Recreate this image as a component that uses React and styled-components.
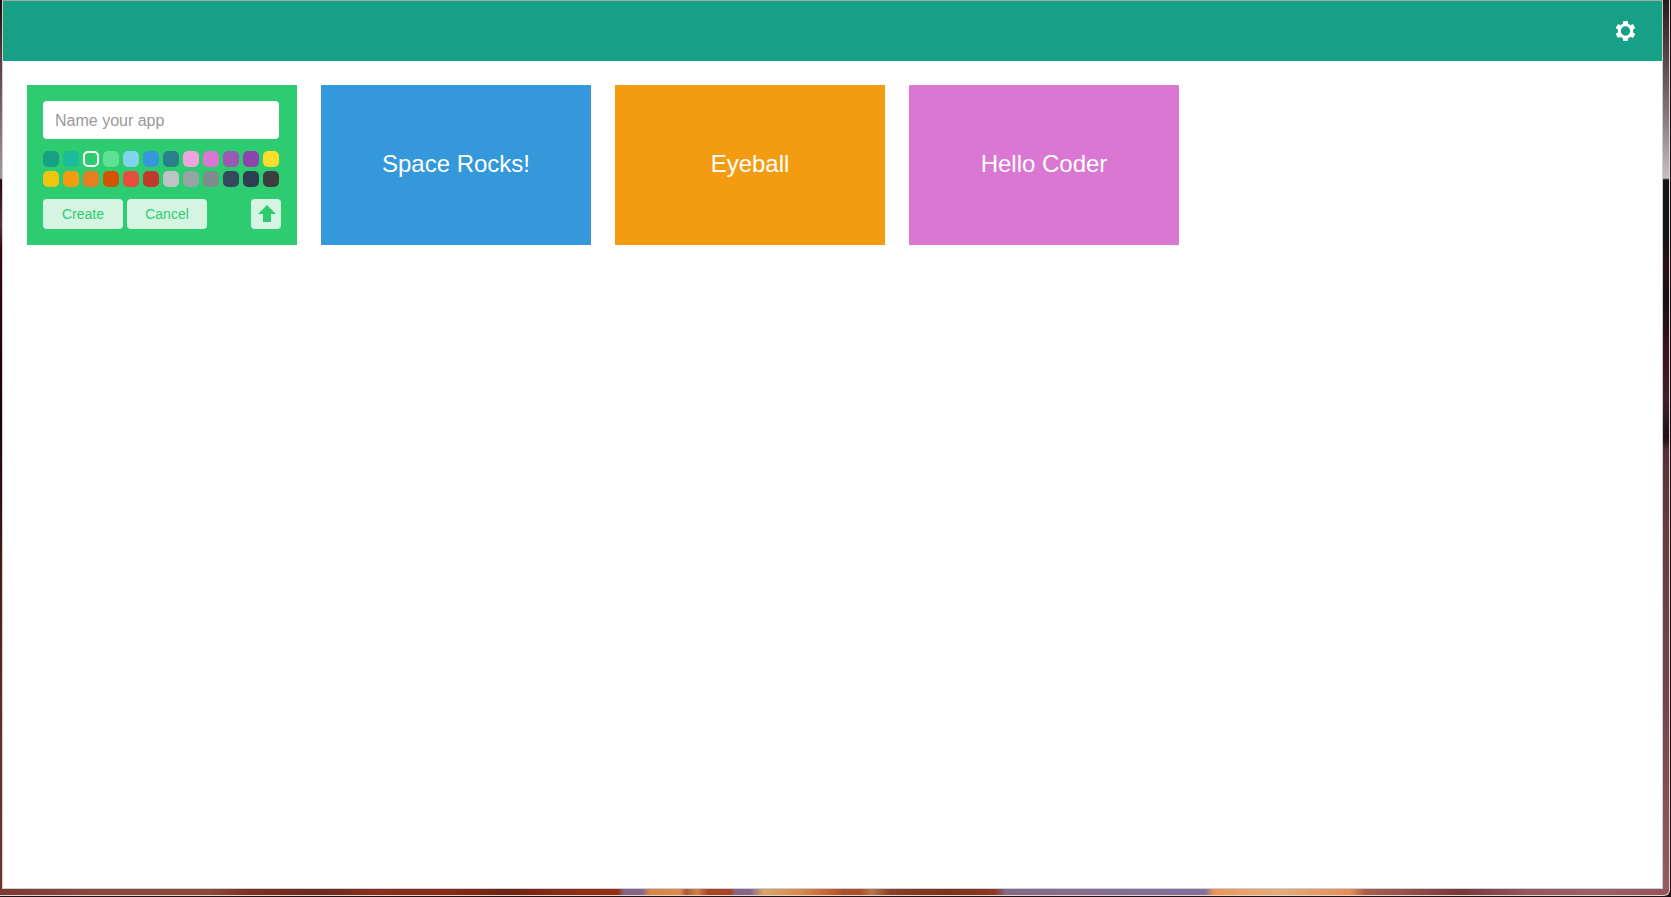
import React, { useState } from "react";
import styled, { createGlobalStyle } from "styled-components";

const GlobalStyle = createGlobalStyle`
  *, *::before, *::after { box-sizing: border-box; }
  body {
    margin: 0;
    font-family: "Liberation Sans", Arial, sans-serif;
    background: #1b1016;
  }
`;

const Desktop = styled.div`
  display: flex;
  min-height: 100vh;
  padding: 0 1px 1px 0;
  background: #1b1016;
`;

const Frame = styled.div`
  flex: 1;
  display: flex;
  padding: 0 6px 6px 2px;
  border: solid #ecd0d0;
  border-width: 0 1px 1px 0;
  border-radius: 0 0 6px 0;
  background:
    linear-gradient(90deg, #7a3b34 0, #8c4a3e 100px, #8c4a36 210px, #7c2f20 250px, #6a2a1c 320px, #85301f 370px, #8a2c16 440px, #6c2414 510px, #8a2c14 560px, #943016 618px, #84688a 624px, #84688a 642px, #d88444 650px, #dc8c50 680px, #a85a34 686px, #d4824a 697px, #a64624 708px, #a64624 730px, #84688a 736px, #84688a 750px, #dca468 764px, #d88a4c 800px, #cc6834 825px, #a8502c 845px, #ac5028 860px, #b8784a 872px, #884228 890px, #7a3418 945px, #8a3a20 995px, #846a88 1006px, #84709c 1205px, #ec9454 1214px, #e8a46c 1250px, #e4ac78 1280px, #e88c54 1350px, #a85e4c 1366px, #985450 1400px, #78383a 1460px, #94585c 1530px, #9c6264 1600px, #94545a 1662px) left bottom / 100% 6px no-repeat,
    linear-gradient(180deg, #281c1e 0, #594648 60px, #8a7c80 120px, #c4c2c4 178px, #141416 180px, #141416 240px, #2c1012 270px, #141012 295px, #3a121c 350px, #40202a 400px, #1e1014 438px, #543036 450px, #6a3c40 540px, #74444a 700px, #985c60 100%) right top / 6px 100% no-repeat,
    linear-gradient(180deg, #200808 0, #603c40 60px, #a4989c 178px, #2c0408 180px, #5c3038 225px, #380408 250px, #200206 420px, #4a1c1a 580px, #702c28 750px, #7a302a 100%) left top / 2px 100% no-repeat;
`;

const AppWindow = styled.div`
  flex: 1;
  display: flex;
  flex-direction: column;
  min-width: 0;
  border: 1px solid #ccd0d0;
  border-top-color: #a4aaa8;
  background: #fff;
`;

const TopBar = styled.header`
  display: flex;
  justify-content: flex-end;
  align-items: center;
  height: 60px;
  padding: 0 24px;
  background: #16a085;
`;

const SettingsButton = styled.button`
  display: flex;
  padding: 0;
  border: 0;
  background: none;
  color: #fff;
  cursor: pointer;
`;

const AppGrid = styled.main`
  display: flex;
  flex-wrap: wrap;
  gap: 24px;
  padding: 24px;
`;

const AppTile = styled.a`
  display: flex;
  align-items: center;
  justify-content: center;
  width: 270px;
  height: 160px;
  padding-bottom: 2px;
  background: ${(p) => p.$color};
  color: #fff;
  font-size: 24px;
  line-height: 28px;
  text-decoration: none;
`;

const CreateTile = styled.form`
  display: flex;
  flex-direction: column;
  gap: 12px;
  width: 270px;
  height: 160px;
  padding: 16px;
  background: ${(p) => p.$color};
`;

const NameInput = styled.input`
  width: 236px;
  height: 38px;
  padding: 2px 12px 0;
  border: 0;
  border-radius: 4px;
  background: #fff;
  color: #333;
  font: 16px "Liberation Sans", Arial, sans-serif;
  &::placeholder { color: #999; opacity: 1; }
`;

const Palette = styled.div`
  display: grid;
  grid-template-columns: repeat(12, 16px);
  gap: 4px;
`;

const Swatch = styled.input`
  appearance: none;
  width: 16px;
  height: 16px;
  margin: 0;
  border: 0 solid #fff;
  border-radius: 5px;
  background: ${(p) => p.$color};
  cursor: pointer;
  &:checked { border-width: 2px; }
`;

const Actions = styled.div`
  display: flex;
  gap: 4px;
`;

const ActionButton = styled.button`
  display: flex;
  align-items: center;
  justify-content: center;
  width: ${(p) => (p.$icon ? 30 : 80)}px;
  height: 30px;
  margin-left: ${(p) => (p.$icon ? "auto" : 0)};
  padding: 0;
  border: 0;
  border-radius: 4px;
  background: rgba(255, 255, 255, 0.8);
  color: ${(p) => p.$color};
  font: 14px "Liberation Sans", Arial, sans-serif;
  cursor: pointer;
`;

const colors = [
  "#16a085", "#1abc9c", "#2ecc71", "#5ee095", "#80d4ea", "#3498db",
  "#2a808a", "#eea4dc", "#d977d3", "#9b59b6", "#8e44ad", "#f9df2c",
  "#f1c40f", "#f39c12", "#e67e22", "#d35400", "#e74c3c", "#c0392b",
  "#bdc3c7", "#95a5a6", "#7f8c8d", "#34495e", "#2c3e50", "#3d3d3d",
];

const apps = [
  { name: "Space Rocks!", color: "#3498db" },
  { name: "Eyeball", color: "#f39c12" },
  { name: "Hello Coder", color: "#d977d3" },
];

function GearIcon() {
  return (
    <svg width="24" height="24" viewBox="0.5 0 24 24" aria-hidden="true">
      <circle cx="12" cy="12" r="6.200" fill="none" stroke="currentColor" strokeWidth="3" />
      {[0, 60, 120, 180, 240, 300].map((angle) => (
        <rect
          key={angle}
          x="9.600"
          y="2"
          width="4.800"
          height="4.800"
          rx="0.700"
          fill="currentColor"
          transform={`rotate(${angle} 12 12)`}
        />
      ))}
    </svg>
  );
}

function UpArrowIcon() {
  return (
    <svg width="20" height="18" viewBox="0 0 20 18" aria-hidden="true">
      <path fill="currentColor" d="M11 0l9 9h-5v8H7V9H2z" />
    </svg>
  );
}

export default function App() {
  const [color, setColor] = useState("#2ecc71");

  return (
    <Desktop>
      <GlobalStyle />
      <Frame>
        <AppWindow>
          <TopBar>
            <SettingsButton type="button" aria-label="Settings">
              <GearIcon />
            </SettingsButton>
          </TopBar>
          <AppGrid>
            <CreateTile $color={color} onSubmit={(e) => e.preventDefault()}>
              <NameInput type="text" placeholder="Name your app" aria-label="Name your app" />
              <Palette role="radiogroup" aria-label="App color">
                {colors.map((c) => (
                  <Swatch
                    key={c}
                    type="radio"
                    name="color"
                    value={c}
                    aria-label={c}
                    $color={c}
                    checked={c === color}
                    onChange={() => setColor(c)}
                  />
                ))}
              </Palette>
              <Actions>
                <ActionButton type="submit" $color={color}>Create</ActionButton>
                <ActionButton type="button" $color={color}>Cancel</ActionButton>
                <ActionButton type="button" $icon $color={color} aria-label="Upload">
                  <UpArrowIcon />
                </ActionButton>
              </Actions>
            </CreateTile>
            {apps.map((app) => (
              <AppTile key={app.name} href="#" $color={app.color}>{app.name}</AppTile>
            ))}
          </AppGrid>
        </AppWindow>
      </Frame>
    </Desktop>
  );
}
